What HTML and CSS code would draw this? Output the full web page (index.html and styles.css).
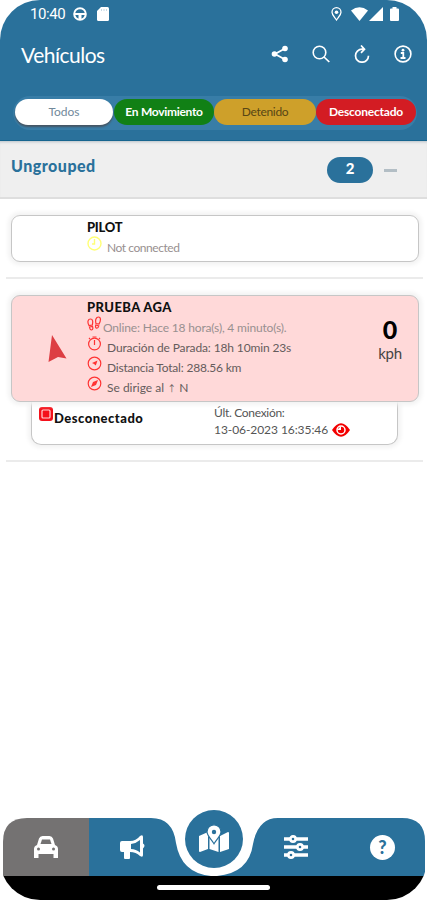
FILE: index.html
```html
<!DOCTYPE html>
<html lang="es">
<head>
    <meta charset="UTF-8">
    <meta name="viewport" content="width=device-width, initial-scale=1.0">
    <title>Vehículos</title>
    <link rel="stylesheet" href="styles.css">
</head>
<body>
<div class="phone">

    <header class="header">
        <div class="status-bar">
            <span class="clock">10:40</span>
            <svg class="status-wheel" width="14" height="14" viewBox="0 0 14 14"><circle cx="7" cy="7" r="5.8" fill="none" stroke="#fff" stroke-width="2"/><path d="M1 6h12v2H8.5v5h-3V8H1z" fill="#fff"/></svg>
            <svg class="status-card" width="12" height="14" viewBox="0 0 12 14"><path d="M4 0h6.500q1.500 0 1.500 1.500v11q0 1.500-1.500 1.500h-9Q0 14 0 12.500V4z" fill="#fff"/><path d="M4.500 2v2M7 2v2M9.500 2v2" stroke="#c5d8e4" stroke-width="1"/></svg>
            <span class="spacer"></span>
            <svg class="status-pin" width="11" height="14" viewBox="0 0 11 14"><path d="M5.500 13C3.500 10 1 7.800 1 5.200a4.500 4.500 0 0 1 9 0C10 7.800 7.500 10 5.500 13z" fill="none" stroke="#fff" stroke-width="1.300"/><circle cx="5.500" cy="5.300" r="1.800" fill="#fff"/></svg>
            <svg class="status-wifi" width="17" height="14" viewBox="0 0 17 14"><path d="M0 3.500Q8.500-3 17 3.500L8.500 14z" fill="#fff"/></svg>
            <svg class="status-signal" width="14" height="14" viewBox="0 0 14 14"><path d="M14 0v14H0z" fill="#fff"/></svg>
            <svg class="status-battery" width="9" height="14" viewBox="0 0 9 14"><path d="M2.500 0h4v1.500H8q1 0 1 1V13q0 1-1 1H1q-1 0-1-1V2.500q0-1 1-1h1.500z" fill="#fff"/></svg>
        </div>

        <div class="title-bar">
            <h1>Vehículos</h1>
            <div class="actions">
                <svg width="18" height="18" viewBox="0 0 18 18"><path d="M14 3.500L4 9l10 5.500" fill="none" stroke="#fff" stroke-width="1.800"/><circle cx="14" cy="3.500" r="2.800" fill="#fff"/><circle cx="3.500" cy="9" r="2.800" fill="#fff"/><circle cx="14" cy="14.500" r="2.800" fill="#fff"/></svg>
                <svg width="18" height="18" viewBox="0 0 18 18"><circle cx="7.500" cy="7.500" r="6.300" fill="none" stroke="#fff" stroke-width="1.600"/><path d="M12 12l5.300 5" stroke="#fff" stroke-width="1.700"/></svg>
                <svg width="18" height="18" viewBox="0 0 18 18"><path d="M10.500 4.200H9a6.500 6.500 0 1 0 6.500 6.500M8 .5L11.500 4.200 8 7.800" fill="none" stroke="#fff" stroke-width="1.700"/></svg>
                <svg width="18" height="18" viewBox="0 0 18 18"><circle cx="9" cy="9" r="7.900" fill="none" stroke="#fff" stroke-width="1.600"/><circle cx="9" cy="5.200" r="1.400" fill="#fff"/><path d="M6.800 8h2.500v5M6.500 13h5" fill="none" stroke="#fff" stroke-width="1.800"/></svg>
            </div>
        </div>

        <div class="tabs">
            <div class="tab tab-all"><span>Todos</span></div>
            <div class="tab tab-moving"><span>En Movimiento</span></div>
            <div class="tab tab-stopped"><span>Detenido</span></div>
            <div class="tab tab-offline"><span>Desconectado</span></div>
        </div>
    </header>

    <section class="group">
        <h2>Ungrouped</h2>
        <span class="count">2</span>
        <span class="collapse"></span>
    </section>

    <main class="list">
        <article class="item">
            <div class="card">
                <div class="info">
                    <h3 class="name-pilot">PILOT</h3>
                    <div class="line">
                        <svg width="15" height="15" viewBox="0 0 15 15" fill="none" stroke="#ffff76" stroke-width="1.400"><circle cx="7.500" cy="7.500" r="6.500"/><path d="M7.500 3v5H5"/></svg>
                        <span class="muted t-not">Not connected</span>
                    </div>
                </div>
            </div>
        </article>

        <article class="item">
            <div class="card card-offline">
                <svg class="arrow" width="19" height="28" viewBox="0 0 19 28"><path d="M4 0l14.500 23.500-8.500-1.500L.500 27z" fill="#dd3e43"/></svg>
                <div class="info">
                    <h3 class="name-prueba">PRUEBA AGA</h3>
                    <div class="line">
                        <svg width="15" height="15" viewBox="0 0 15 15" fill="none" stroke="#f33" stroke-width="1.200"><path d="M2 9.500C0 6 1 3 3.500 3S6 6 5.300 9zM2.500 11l3-.5q1 3-1 3.500-1.500 0-2-3zM9 7.500C8 4 9 1 11.500 1S14 4.500 12 8zM8.800 9l3 .8q-.8 2.800-2.300 2.400T8.800 9z"/></svg>
                        <span class="muted t-online">Online: Hace 18 hora(s), 4 minuto(s).</span>
                    </div>
                    <div class="line">
                        <svg width="15" height="15" viewBox="0 0 15 15" fill="none" stroke="#f33" stroke-width="1.200"><circle cx="7.500" cy="8" r="5.900"/><path d="M7.500 4v5M5.500 1h4M2 3l1-1M12 2l1 1"/></svg>
                        <span class="t-duration">Duración de Parada: 18h 10min 23s</span>
                    </div>
                    <div class="line">
                        <svg width="15" height="15" viewBox="0 0 15 15" fill="none" stroke="#f33" stroke-width="1.200"><circle cx="7.500" cy="7.500" r="6.300"/><path d="M10.500 4.500L8.800 9.500 7 8 5 7z" fill="#f33" stroke="none"/></svg>
                        <span class="t-distance">Distancia Total: 288.56 km</span>
                    </div>
                    <div class="line">
                        <svg width="15" height="15" viewBox="0 0 15 15" fill="none" stroke="#f33" stroke-width="1.200"><circle cx="7.500" cy="7.500" r="6.300"/><path d="M11 4L9 9l-5 2 2-5z" fill="#f33" stroke="none"/></svg>
                        <span class="t-heading">Se dirige al <i>↑</i> N</span>
                    </div>
                </div>
                <div class="speed"><b>0</b><span>kph</span></div>
            </div>
            <div class="card-footer">
                <svg class="stop-icon" width="14" height="14" viewBox="0 0 14 14"><rect x="0" y="0" width="14" height="14" rx="3" fill="#f4111b"/><rect x="3" y="3" width="8" height="8" rx="1" fill="none" stroke="#ffd8d8" stroke-width="1.200"/></svg>
                <b class="state">Desconectado</b>
                <div class="last">
                    <div class="t-last">Últ. Conexión:</div>
                    <div class="date"><span>13-06-2023 16:35:46</span>
                        <svg width="18" height="14" viewBox="0 0 18 14"><path d="M0 7Q9-6.500 18 7 9 20.500 0 7z" fill="#f30000"/><circle cx="9" cy="7" r="4" fill="none" stroke="#fff" stroke-width="1.500"/><path d="M9 3v4H5z" fill="#fff"/></svg>
                    </div>
                </div>
            </div>
        </article>
    </main>

    <nav class="nav">
        <svg class="nav-shape" width="427" height="58" viewBox="0 0 427 58">
            <path d="M88 0h63q22 0 25 25 5 30 35 33H88z" fill="#2a719b"/>
            <path d="M217 58q32-3 36-32Q258 0 278 0h124q23 0 23 23v35z" fill="#2a719b"/>
            <path d="M27 0h62v58H3V24Q3 0 27 0z" fill="#747272"/>
        </svg>
        <div class="nav-item">
            <svg width="26" height="24" viewBox="0 0 26 24"><path d="M4 10l2-6.500Q7 1 9.500 1h7Q19 1 20 3.500l2 6.500q3 1 3 4v9h-4.500v-4h-15v4H1v-9q0-3 3-4z" fill="#fff"/><path d="M7.500 9l1.500-4.500h8L18.500 9z" fill="#747272"/><circle cx="5.500" cy="14" r="1.500" fill="#747272"/><circle cx="20.500" cy="14" r="1.500" fill="#747272"/></svg>
        </div>
        <div class="nav-item nav-news">
            <svg width="26" height="26" viewBox="0 0 26 26"><path d="M3 7h8q6 0 10-5 3-2 3 1v6.500q3 2 0 5V21q0 3-3 1-4-4-10-4v6q0 1-1 1H6q-1 0-1-1v-6H3q-2 0-2-2V9q0-2 2-2z" fill="#fff"/><path d="M12 10q5-.500 9-4v12.500q-4-3.500-9-3.500z" fill="#2a719b"/></svg>
        </div>
        <div class="nav-main">
            <svg width="32" height="30" viewBox="0 0 32 30"><path d="M1 12l9-4v17l-8 3q-1 0-1-1zM11.500 9l9 3v16l-9-3zM22 12l8-4q1 0 1 1v16l-9 3z" fill="#fff"/><path d="M16 .8a7 7 0 0 1 7 7c0 4-4 7-7 12-3-5-7-8-7-12a7 7 0 0 1 7-7z" fill="#fff" stroke="#2a719b" stroke-width="1.200"/><circle cx="16" cy="8" r="2.200" fill="#2a719b"/></svg>
        </div>
        <div class="nav-item nav-settings">
            <svg width="26" height="26" viewBox="0 0 26 26"><path d="M1 5h24M1 13h24M1 21h24" stroke="#fff" stroke-width="3.600"/><g fill="#2a719b" stroke="#fff" stroke-width="2.600"><circle cx="10" cy="5" r="2.600"/><circle cx="17" cy="13" r="2.600"/><circle cx="8" cy="21" r="2.600"/></g></svg>
        </div>
        <div class="nav-item">
            <div class="help">?</div>
        </div>
    </nav>
    <div class="gesture"><span></span></div>
</div>
</body>
</html>
```
FILE: styles.css
```css
* {
    box-sizing: border-box;
}
body {
    margin: 0;
    background: #fff;
    font-family: Lato, "Liberation Sans", sans-serif;
    color: #444;
}
h1, h2, h3 {
    margin: 0;
}
svg {
    display: block;
    flex: none;
}
.phone {
    width: 427px;
    height: 900px;
    display: flex;
    flex-direction: column;
    overflow: hidden;
    border-radius: 40px;
    background: #fff;
}
.header {
    height: 141px;
    background: #2a719b;
    border-bottom: 1px solid #17658f;
    color: #fff;
}
.status-bar {
    display: flex;
    align-items: center;
    height: 27px;
    padding: 0 28px 0 30px;
}
.clock {
    width: 43px;
    font-family: Roboto, sans-serif;
    font-size: 15px;
    letter-spacing: -0.4px;
}
.status-card {
    margin-left: 10px;
}
.spacer {
    flex: 1;
}
.status-pin {
    margin-right: 2px;
}
.status-wifi {
    margin-left: 7px;
}
.status-signal {
    margin-left: 1px;
}
.status-battery {
    margin-left: 7px;
}
.title-bar {
    display: flex;
    align-items: center;
    justify-content: space-between;
    height: 54px;
    padding: 0 15px 0 21px;
}
h1 {
    font-size: 21px;
    font-weight: 400;
    letter-spacing: -0.5px;
}
.actions {
    display: flex;
    gap: 23px;
}
.tabs {
    display: flex;
    margin: 15px 10px 0 13px;
    height: 34px;
    padding: 3px 1px 5px 2px;
    border-radius: 17px;
    background: #387da7;
}
.tab {
    width: 100px;
    height: 26px;
    border-radius: 13px;
    line-height: 26px;
    text-align: center;
    font-size: 12px;
    white-space: nowrap;
}
.tab-all {
    width: 98px;
    margin-right: 1px;
    background: #fff;
    color: #71899b;
    box-shadow: 0 2px 2px #465664;
}
.tab-moving {
    background: #118015;
    font-weight: 700;
    letter-spacing: -0.3px;
}
.tab-stopped {
    width: 102px;
    background: #cea02a;
    color: #584615;
    letter-spacing: -0.3px;
}
.tab-offline {
    background: #d31c23;
    font-weight: 700;
    letter-spacing: -0.2px;
}
.group {
    display: flex;
    height: 58px;
    padding: 16px 30px 0 11px;
    background: #efefef;
    border-bottom: 2px solid #dedede;
    box-shadow: inset 0 3px 3px -2px #b9c2c8;
}
.group h2 {
    flex: 1;
    font-size: 16px;
    line-height: 17px;
    font-weight: 900;
    letter-spacing: 0.5px;
    color: #2a719b;
}
.count {
    width: 46px;
    height: 26px;
    border-radius: 13px;
    background: #2a719b;
    color: #fff;
    font-size: 15px;
    font-weight: 900;
    line-height: 22px;
    text-align: center;
}
.collapse {
    width: 13px;
    height: 3px;
    margin: 12px 0 0 11px;
    background: #b3bec5;
}
.list {
    flex: 1;
    padding: 0 4px 0 6px;
}
.item {
    padding: 16px 4px 15px 5px;
    border-bottom: 2px solid #ebebeb;
}
.card {
    position: relative;
    display: flex;
    height: 47px;
    border: 1.5px solid #c6c6c6;
    border-radius: 9px;
    background: #fff;
    box-shadow: 0 0 4px 3px #f3f3f3;
}
.card + .card-footer {
    background: #fff;
}
.card-offline {
    z-index: 1;
    height: 107px;
    background: #ffd9d9;
}
.arrow {
    margin: 39px 0 0 36px;
}
.info {
    width: 270px;
    padding: 3px 0 0 75px;
}
.arrow + .info {
    padding-left: 20px;
}
h3 {
    height: 17px;
    line-height: 17px;
    font-size: 13px;
    font-weight: 900;
    color: #111;
}
.name-pilot {
    letter-spacing: -0.3px;
}
.name-prueba {
    letter-spacing: 0.4px;
}
.line {
    display: flex;
    height: 20px;
    font-size: 12px;
    white-space: nowrap;
}
.line span {
    margin-left: 5px;
    padding-top: 4px;
    line-height: 16px;
    color: #655c5c;
}
.line .muted {
    color: #989090;
}
.line .t-online {
    margin-left: 1px;
    letter-spacing: -0.17px;
}
.t-not {
    letter-spacing: -0.45px;
}
.t-duration {
    letter-spacing: -0.13px;
}
.t-distance {
    letter-spacing: -0.2px;
}
.t-heading i {
    font-family: "Noto Sans CJK JP", sans-serif;
    font-size: 9px;
    font-style: normal;
    line-height: 10px;
}
.speed {
    width: 46px;
    margin-left: auto;
    margin-right: 5px;
    padding-top: 20px;
    text-align: center;
    color: #444;
}
.speed b {
    display: block;
    font-size: 25px;
    line-height: 27px;
    font-weight: 900;
    color: #000;
}
.speed span {
    display: block;
    font-size: 15px;
    line-height: 21px;
    letter-spacing: -0.3px;
}
.card-footer {
    display: flex;
    height: 44px;
    margin: -1px 21px 0 20px;
    padding: 6px 0 0 7px;
    border: 1.5px solid #c6c6c6;
    border-top: 0;
    border-radius: 0 0 10px 10px;
    box-shadow: 0 0 4px 3px #f3f3f3;
}
.state {
    width: 161px;
    padding: 3px 0 0 1px;
    font-size: 13px;
    line-height: 16px;
    font-weight: 900;
    letter-spacing: 0.5px;
    color: #111;
}
.last {
    font-size: 12px;
    line-height: 17px;
    white-space: nowrap;
    color: #555;
}
.t-last {
    margin-top: -3px;
    letter-spacing: -0.3px;
}
.date {
    display: flex;
    gap: 4px;
    align-items: center;
    letter-spacing: -0.07px;
}
.nav {
    position: relative;
    display: flex;
    height: 58px;
    padding-left: 3px;
}
.nav-shape {
    position: absolute;
    left: 0;
    top: 0;
}
.nav-item {
    position: relative;
    display: flex;
    align-items: center;
    justify-content: center;
    width: 85px;
}
.nav-news {
    padding-left: 2px;
}
.nav-settings {
    padding-right: 4px;
}
.nav-main {
    position: relative;
    display: flex;
    align-items: center;
    justify-content: center;
    width: 58px;
    height: 58px;
    margin: -8px 12px 0;
    border-radius: 50%;
    background: #2a719b;
}
.help {
    width: 25px;
    height: 25px;
    border-radius: 50%;
    background: #fff;
    color: #2a719b;
    text-align: center;
    font-size: 18px;
    line-height: 25px;
    font-weight: 900;
}
.gesture {
    display: flex;
    justify-content: center;
    height: 24px;
    padding-top: 9px;
    background: #000;
}
.gesture span {
    width: 113px;
    height: 5px;
    border-radius: 3px;
    background: #fff;
}
```
